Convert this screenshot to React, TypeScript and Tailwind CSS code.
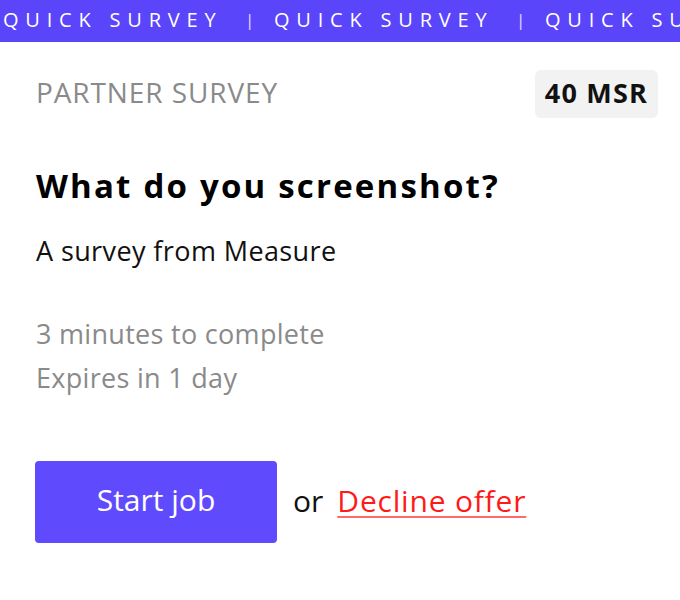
import React from "react";

const font = { fontFamily: "'Open Sans', 'Noto Sans', sans-serif" };

export default function App() {
  const items = Array.from({ length: 3 });
  return (
    <div className="w-[680px] h-[600px] bg-white overflow-hidden" style={font}>
      <div className="h-[42px] bg-[#5b45fb] overflow-hidden whitespace-nowrap">
        <div className="flex pl-[3px] text-white text-[20px] leading-[40px]">
          {items.map((_, i) => (
            <div key={i} className="flex shrink-0">
              <span className="w-[242px] shrink-0 tracking-[6.8px]">QUICK SURVEY</span>
              <span className="w-[29px] shrink-0 text-[17px] opacity-80">|</span>
            </div>
          ))}
        </div>
      </div>
      <div className="pl-[36px] pr-[22px]">
        <div className="flex items-start justify-between mt-[28px] h-[48px]">
          <span className="text-[28px] leading-[44px] tracking-[0.9px] text-[#8a8a8a]">PARTNER SURVEY</span>
          <span className="bg-[#f2f2f2] rounded-[6px] pl-[10px] pr-[10px] h-[48px] text-[27px] leading-[45px] tracking-[1.2px] font-bold text-[#111]">40 MSR</span>
        </div>
        <h1 className="mt-[48px] text-[33px] font-bold text-black leading-[40px] tracking-[2.2px]">What do you screenshot?</h1>
        <p className="mt-[27px] text-[27px] text-[#111] leading-[36px] tracking-[0.4px]">A survey from Measure</p>
        <p className="mt-[47px] text-[27px] text-[#8a8a8a] leading-[36px] tracking-[0.3px]">3 minutes to complete</p>
        <p className="mt-[8px] text-[27px] text-[#8a8a8a] leading-[36px] tracking-[0.3px]">Expires in 1 day</p>
        <div className="mt-[65px] flex items-center">
          <button className="w-[242px] h-[82px] -ml-[1px] bg-[#5f4bfd] rounded-[4px] text-white text-[30px] pb-[5px] flex items-center justify-center">Start job</button>
          <span className="ml-[16px] text-[30px] text-[#111] pb-[3px]">or</span>
          <a className="ml-[14px] text-[30px] tracking-[0.8px] text-[#ff1a1a] underline decoration-[#ff6b6b] decoration-[1.5px] underline-offset-[4px] pb-[3px]">Decline offer</a>
        </div>
      </div>
    </div>
  );
}
